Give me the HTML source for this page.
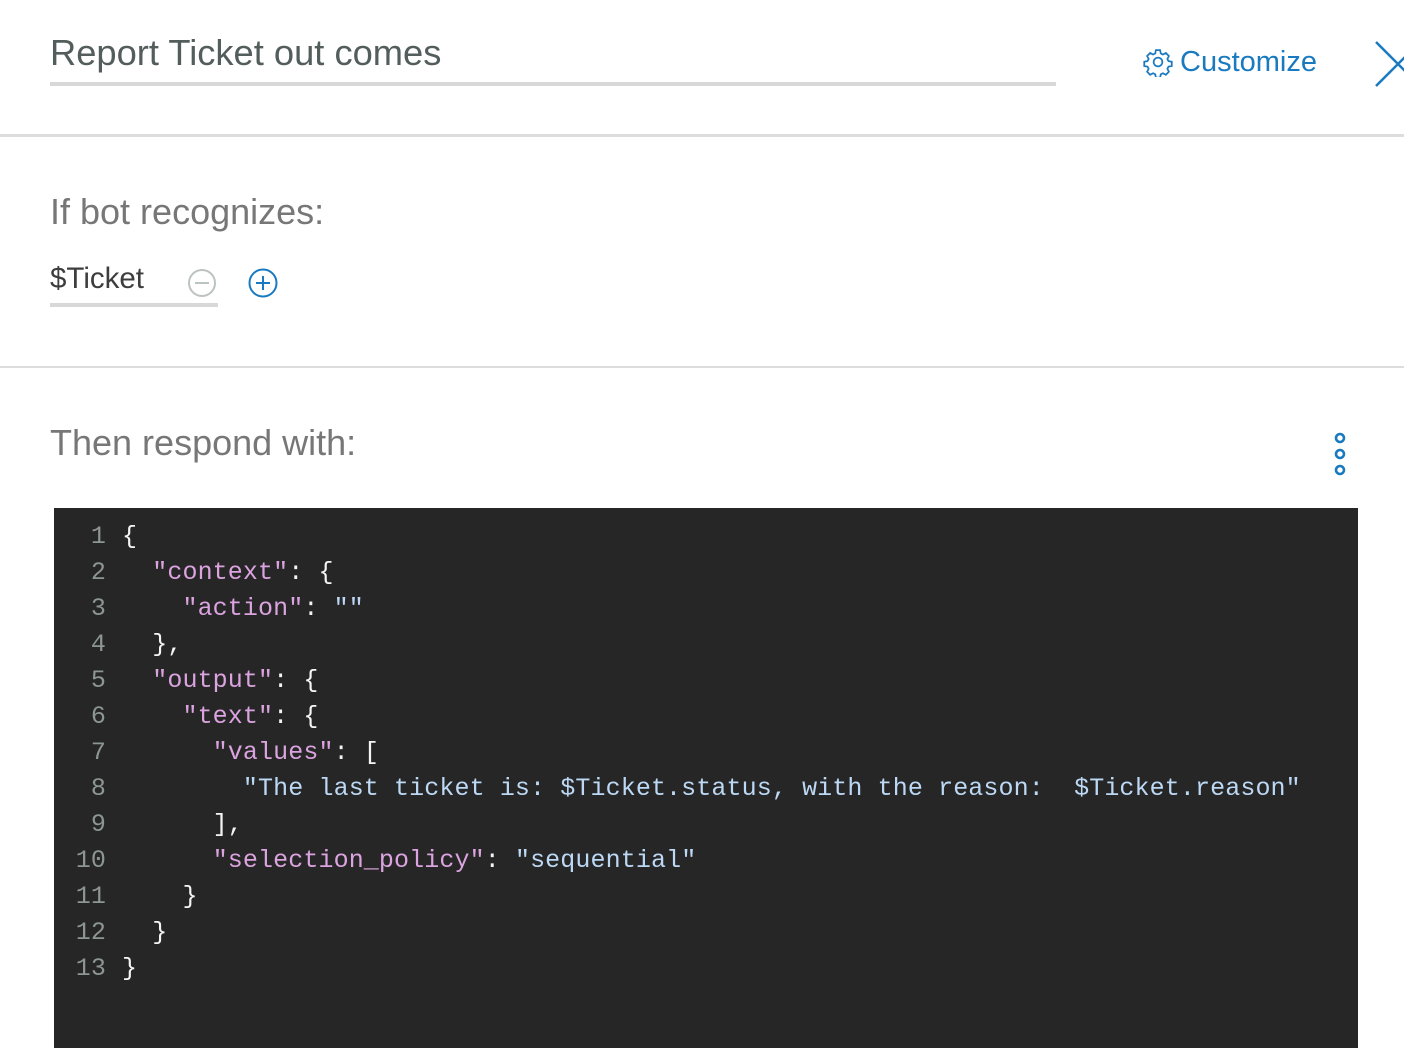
<!DOCTYPE html>
<html><head><meta charset="utf-8"><style>
*{margin:0;padding:0;box-sizing:border-box}
body{width:1404px;height:1060px;background:#fff;position:relative;overflow:hidden;font-family:"Liberation Sans",sans-serif}
.abs{position:absolute;white-space:nowrap}
.title{left:50px;top:31px;font-size:36.3px;color:#535d5c;line-height:44px}
.h{font-size:36px;color:#777;font-weight:300;line-height:44px}
.code{left:54px;top:508px;width:1304px;height:540px;background:#262626;font-family:"Liberation Mono",monospace;font-size:25px;letter-spacing:0.11px;line-height:36px;padding-top:11px}
.ln{display:inline-block;width:52px;text-align:right;color:#8c9693;margin-right:16px}
.row{white-space:pre;color:#f4f4f4;height:36px}
.k{color:#dba3df}.s{color:#bcd8f4}
</style></head><body>
<div class="abs title">Report Ticket out comes</div>
<div class="abs" style="left:50px;top:82px;width:1006px;height:4px;background:#d8d8d8"></div>
<div class="abs" style="left:1143px;top:44px;color:#1a7ac0;font-size:29px;line-height:36px;display:flex;align-items:center">
<svg width="30" height="30" viewBox="0 0 24 24" style="margin-right:7px"><g fill="none" stroke="#1a7ac0" stroke-width="1.4"><circle cx="12" cy="12" r="3.5"/><path d="M10.3 2.5h3.4l.5 2.6 1.7.9 2.4-1.2 2.4 2.4-1.2 2.4.9 1.7 2.6.5v3.4l-2.6.5-.9 1.7 1.2 2.4-2.4 2.4-2.4-1.2-1.7.9-.5 2.6h-3.4l-.5-2.6-1.7-.9-2.4 1.2-2.4-2.4 1.2-2.4-.9-1.7-2.6-.5v-3.4l2.6-.5.9-1.7-1.2-2.4 2.4-2.4 2.4 1.2 1.7-.9z"/></g></svg>Customize</div>
<svg class="abs" style="left:1370px;top:36px" width="40" height="56"><path d="M6 6L50 50M50 6L6 50" stroke="#1a7ac0" stroke-width="2.5"/></svg>
<div class="abs" style="left:0;top:134px;width:1404px;height:3px;background:#ddd"></div>
<div class="abs h" style="left:50px;top:190px">If bot recognizes:</div>
<div class="abs" style="left:50px;top:261px;font-size:29.5px;color:#3d3d3d;line-height:36px">$Ticket</div>
<svg class="abs" style="left:187px;top:268px" width="30" height="30"><circle cx="15" cy="15" r="13" fill="none" stroke="#bcc3c3" stroke-width="2"/><path d="M8 15h14" stroke="#bcc3c3" stroke-width="2"/></svg>
<svg class="abs" style="left:247px;top:267px" width="32" height="32"><circle cx="16" cy="16" r="13.5" fill="none" stroke="#1a7ac0" stroke-width="2"/><path d="M9 16h14M16 9v14" stroke="#1a7ac0" stroke-width="2"/></svg>
<div class="abs" style="left:50px;top:303px;width:168px;height:4px;background:#d8d8d8"></div>
<div class="abs" style="left:0;top:366px;width:1404px;height:2px;background:#ddd"></div>
<div class="abs h" style="left:50px;top:421px">Then respond with:</div>
<svg class="abs" style="left:1330px;top:430px" width="20" height="50"><g fill="none" stroke="#1a7ac0" stroke-width="2.6"><circle cx="10" cy="8" r="4"/><circle cx="10" cy="24" r="4"/><circle cx="10" cy="40" r="4"/></g></svg>
<div class="abs code">
<div class="row"><span class="ln">1</span>{</div>
<div class="row"><span class="ln">2</span>  <span class="k">"context"</span>: {</div>
<div class="row"><span class="ln">3</span>    <span class="k">"action"</span>: <span class="s">""</span></div>
<div class="row"><span class="ln">4</span>  },</div>
<div class="row"><span class="ln">5</span>  <span class="k">"output"</span>: {</div>
<div class="row"><span class="ln">6</span>    <span class="k">"text"</span>: {</div>
<div class="row"><span class="ln">7</span>      <span class="k">"values"</span>: [</div>
<div class="row"><span class="ln">8</span>        <span class="s">"The last ticket is: $Ticket.status, with the reason:  $Ticket.reason"</span></div>
<div class="row"><span class="ln">9</span>      ],</div>
<div class="row"><span class="ln">10</span>      <span class="k">"selection_policy"</span>: <span class="s">"sequential"</span></div>
<div class="row"><span class="ln">11</span>    }</div>
<div class="row"><span class="ln">12</span>  }</div>
<div class="row"><span class="ln">13</span>}</div>
</div>
</body></html>
